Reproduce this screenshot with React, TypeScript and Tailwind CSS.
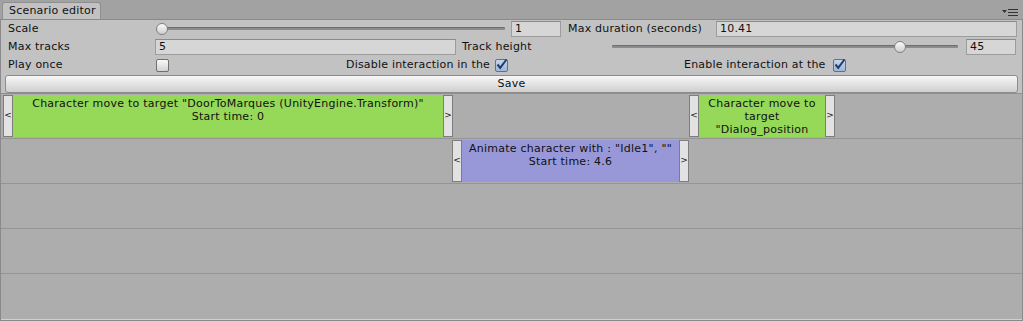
import React from "react";

const font = { fontFamily: '"DejaVu Sans", Verdana, sans-serif' };

const Field = ({ value, className }: { value: string; className: string }) => (
  <div
    className={`h-[16px] border border-[#9c9c9c] border-t-[#8a8a8a] bg-[#d6d6d6] pl-[3px] text-[11px] leading-[14px] text-[#111] ${className}`}
  >
    {value}
  </div>
);

const Slider = ({ className, pos }: { className: string; pos: number }) => (
  <div className={`relative h-[16px] ${className}`}>
    <div className="absolute left-[2px] right-[2px] top-[6px] h-[3px] rounded-full bg-[#8c8c8c] shadow-[inset_0_1px_0_#6e6e6e]" />
    <div
      className="absolute top-[2px] h-[12px] w-[12px] rounded-full border border-[#808080] bg-gradient-to-b from-[#fafafa] to-[#cfcfcf]"
      style={{ left: pos }}
    />
  </div>
);

const Check = ({ on }: { on?: boolean }) => (
  <div
    className={`relative h-[13px] w-[13px] shrink-0 rounded-[2px] border border-[#6f6f6f] ${
      on ? "bg-gradient-to-b from-[#c6d6ee] to-[#9fb6da]" : "bg-gradient-to-b from-[#fafafa] to-[#d2d2d2]"
    }`}
  >
    {on && (
      <svg width="13" height="13" viewBox="0 0 13 13" className="absolute -left-[1px] -top-[2px]">
        <path d="M2.5 6.5 L5.2 9.8 L11.5 1.5" fill="none" stroke="#1f3b66" strokeWidth="2" />
      </svg>
    )}
  </div>
);

const Handle = ({ ch }: { ch: string }) => (
  <div className="flex h-full w-[10px] shrink-0 items-center justify-center border border-[#7d7d7d] bg-[#e2e2e2] text-[9px] text-[#222]">
    {ch}
  </div>
);

const Clip = ({
  left,
  width,
  color,
  lines,
}: {
  left: number;
  width: number;
  color: string;
  lines: string[];
}) => (
  <div className="absolute top-[1px] bottom-[1px] flex" style={{ left, width }}>
    <Handle ch="<" />
    <div
      className={`flex-1 overflow-hidden pt-[2px] text-center text-[11px] leading-[13px] tracking-[0.25px] text-[#111] ${color}`}
    >
      {lines.map((l) => (
        <div key={l} className="whitespace-nowrap">
          {l}
        </div>
      ))}
    </div>
    <Handle ch=">" />
  </div>
);

export default function App() {
  return (
    <div className="h-[321px] w-[1023px] overflow-hidden bg-[#a2a2a2] text-[#111]" style={font}>
      <div className="flex h-[19px] items-end justify-between">
        <div className="ml-[2px] h-[17px] w-[99px] rounded-t-[3px] border border-b-0 border-[#8f8f8f] bg-[#c2c2c2] pl-[6px] text-[11px] leading-[16px] tracking-[0.2px]">
          Scenario editor
        </div>
        <svg width="18" height="8" viewBox="0 0 18 8" className="mb-[3px] mr-[3px]">
          <path d="M0 2 H5 L2.5 5 Z" fill="#333" />
          <rect x="6" y="1" width="10" height="1" fill="#333" />
          <rect x="6" y="4" width="10" height="1" fill="#333" />
          <rect x="6" y="7" width="10" height="1" fill="#333" />
        </svg>
      </div>
      <div className="flex h-[302px] flex-col border border-[#8a8a8a] bg-[#c2c2c2]">
        <div className="flex flex-col gap-[2px] pt-[1px] text-[11px] leading-[16px] tracking-[0.2px]">
          <div className="flex h-[16px] items-center pl-[7px] pr-[5px]">
            <div className="w-[147px] shrink-0">Scale</div>
            <Slider className="w-[352px] shrink-0" pos={1} />
            <Field value="1" className="ml-[4px] w-[50px] shrink-0" />
            <div className="ml-[7px] w-[148px] shrink-0">Max duration (seconds)</div>
            <Field value="10.41" className="flex-1" />
          </div>
          <div className="flex h-[16px] items-center pl-[7px] pr-[6px]">
            <div className="w-[147px] shrink-0">Max tracks</div>
            <Field value="5" className="w-[301px] shrink-0" />
            <div className="ml-[6px] w-[148px] shrink-0">Track height</div>
            <Slider className="w-[350px] shrink-0" pos={284} />
            <Field value="45" className="ml-[6px] w-[50px] shrink-0" />
          </div>
          <div className="flex h-[16px] items-center pl-[7px]">
            <div className="flex w-[338px] items-center">
              <div className="w-[148px] shrink-0">Play once</div>
              <Check />
            </div>
            <div className="flex w-[338px] items-center">
              <div className="w-[149px] shrink-0 whitespace-nowrap">Disable interaction in the</div>
              <Check on />
            </div>
            <div className="flex w-[338px] items-center">
              <div className="w-[149px] shrink-0 whitespace-nowrap">Enable interaction at the</div>
              <Check on />
            </div>
          </div>
        </div>
        <div className="mx-[4px] mt-[2px] h-[18px] rounded-[3px] border border-[#8c8c8c] bg-gradient-to-b from-[#f7f7f7] to-[#cfcfcf] text-center text-[11px] leading-[16px] tracking-[0.2px]">
          Save
        </div>
        <div className="flex flex-1 flex-col border-t border-[#8f8f8f] bg-[#adadad]">
          <div className="relative h-[45px] border-b border-[#959595]">
            <Clip
              left={2}
              width={450}
              color="bg-[#96d858]"
              lines={['Character move to target "DoorToMarques (UnityEngine.Transform)"', "Start time: 0"]}
            />
            <Clip
              left={688}
              width={146}
              color="bg-[#96d858]"
              lines={["Character move to", "target", '"Dialog_position']}
            />
          </div>
          <div className="relative h-[45px] border-b border-[#959595]">
            <Clip
              left={451}
              width={237}
              color="bg-[#9898d8]"
              lines={['Animate character with : "Idle1", ""', "Start time: 4.6"]}
            />
          </div>
          <div className="h-[45px] border-b border-[#959595]" />
          <div className="h-[45px] border-b border-[#959595]" />
          <div className="flex-1 border-b border-[#d0d0d0]" />
        </div>
      </div>
    </div>
  );
}
